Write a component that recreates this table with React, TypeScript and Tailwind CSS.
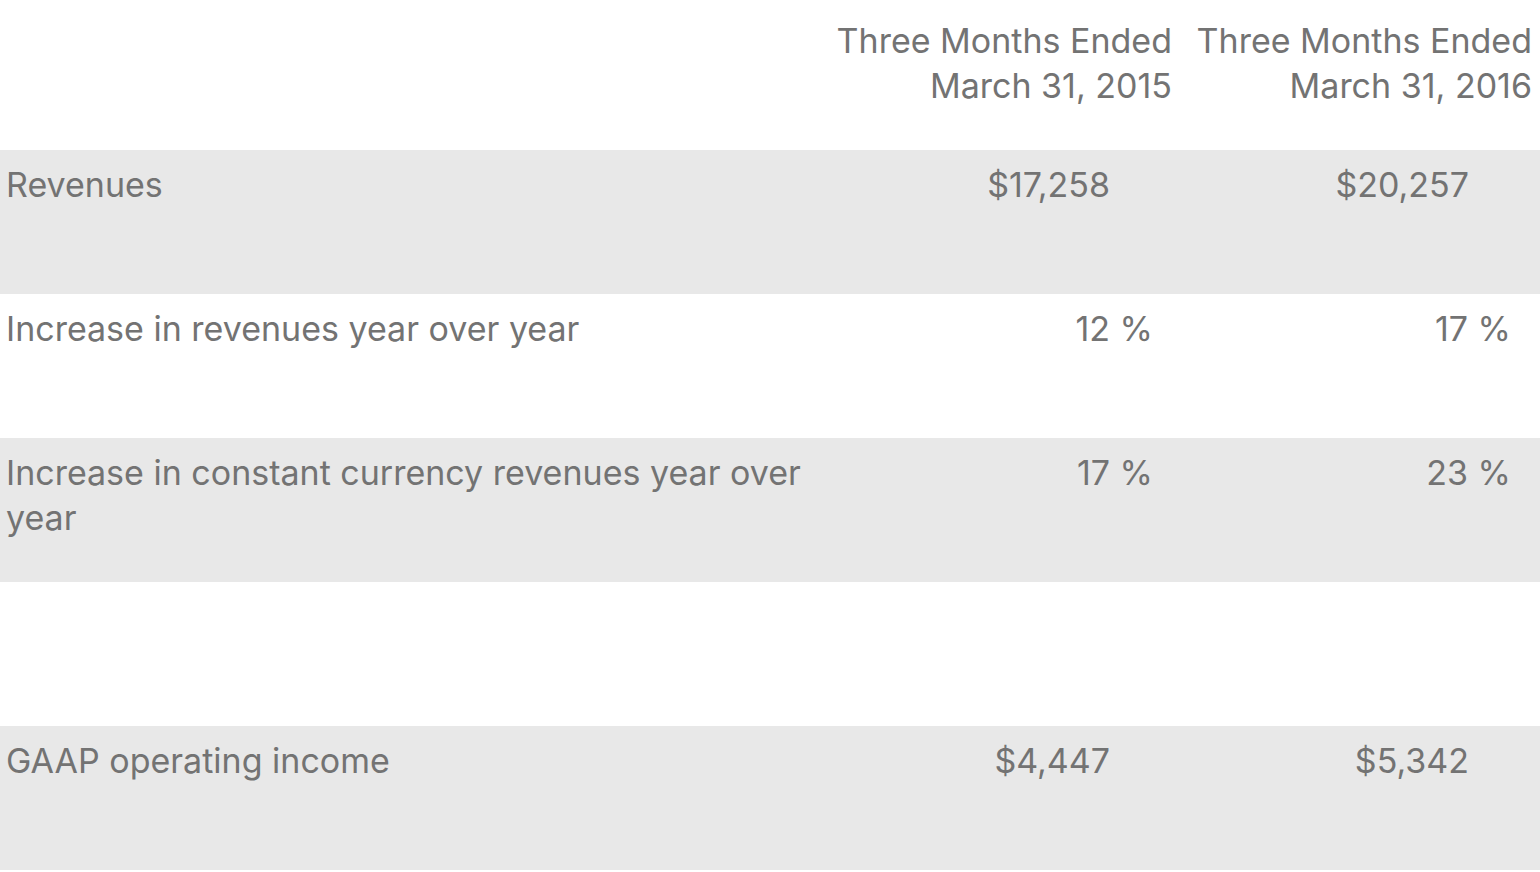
const rows = [
  { label: 'Revenues', a: '$17,258', b: '$20,257', pct: false, shaded: true },
  { label: 'Increase in revenues year over year', a: '12 %', b: '17 %', pct: true, shaded: false },
  { label: 'Increase in constant currency revenues year over\nyear', a: '17 %', b: '23 %', pct: true, shaded: true },
  { label: '', a: '', b: '', pct: false, shaded: false },
  { label: 'GAAP operating income', a: '$4,447', b: '$5,342', pct: false, shaded: true },
]

export default function App() {
  return (
    <div className="w-[1540px] h-[872px] bg-white text-[#737373] text-[34px] leading-[45px] font-['Inter',sans-serif] overflow-hidden">
      {/* Header */}
      <div className="grid grid-cols-[1fr_352px_360px] h-[150px]">
        <div />
        <div className="pt-[18px] pr-2 text-right whitespace-nowrap">
          Three Months Ended
          <br />
          March 31, 2015
        </div>
        <div className="pt-[18px] pr-2 text-right whitespace-nowrap">
          Three Months Ended
          <br />
          March 31, 2016
        </div>
      </div>

      {rows.map((row, i) => (
        <div
          key={i}
          className={`grid grid-cols-[1fr_352px_360px] h-[144px] ${row.shaded ? 'bg-[#e8e8e8]' : 'bg-white'}`}
        >
          <div className="pl-[6px] pt-[12px] whitespace-pre-line">{row.label}</div>
          <div className={`pt-[12px] text-right ${row.pct ? 'pr-[27px]' : 'pr-[70px]'}`}>{row.a}</div>
          <div className={`pt-[12px] text-right ${row.pct ? 'pr-[29px]' : 'pr-[71px]'}`}>{row.b}</div>
        </div>
      ))}
    </div>
  )
}
